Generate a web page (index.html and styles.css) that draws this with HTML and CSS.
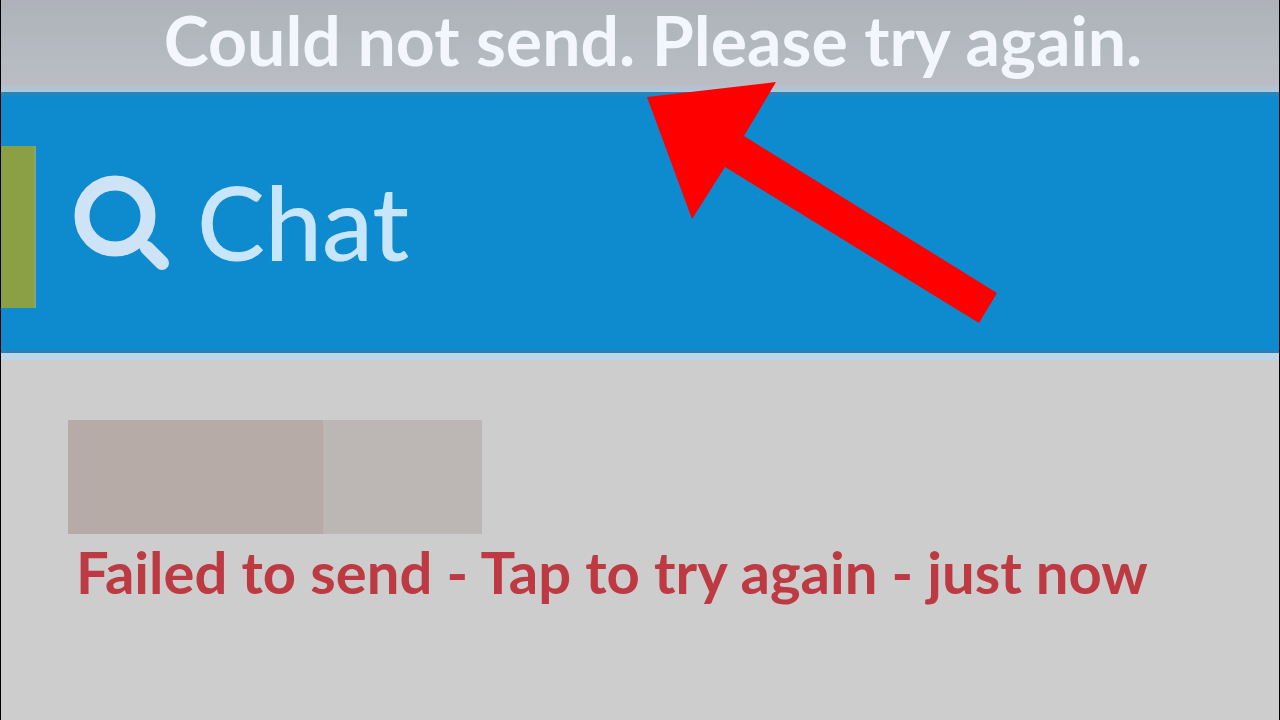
FILE: index.html
```html
<!DOCTYPE html>
<html lang="en">
<head>
<meta charset="utf-8">
<meta name="viewport" content="width=device-width, initial-scale=1">
<title>Chat</title>
<link rel="stylesheet" href="styles.css">
</head>
<body>
<div class="screen">
  <div class="banner" role="alert">Could not send. Please try again.</div>
  <header class="header">
    <span class="tab"></span>
    <button class="search" type="button" aria-label="Search">
      <svg class="search-icon" viewBox="0 0 98 100" fill="none" stroke="#cfe3f6" aria-hidden="true">
        <circle cx="42" cy="44" r="33" stroke-width="15"/>
        <path d="M64 66 L72 74" stroke-width="11"/>
        <path d="M74 76 L89 91" stroke-width="14" stroke-linecap="round"/>
      </svg>
    </button>
    <h1 class="title">Chat</h1>
    <svg class="arrow" viewBox="0 0 352 242" aria-hidden="true">
      <polygon points="0,15 129,0 97,54 350,211 332,241 78,85 45,137" fill="#fe0000"/>
    </svg>
  </header>
  <main class="list">
    <button class="message" type="button">
      <span class="name"><span class="name-first"></span><span class="name-last"></span></span>
      <span class="status">Failed to send - Tap to try again - just now</span>
    </button>
  </main>
</div>
</body>
</html>
```
FILE: styles.css
```css
* {
  box-sizing: border-box;
}

body {
  margin: 0;
  font-family: Lato, "Open Sans", sans-serif;
  background: #cdcdcd;
}

button {
  padding: 0;
  border: 0;
  background: none;
  font: inherit;
  cursor: pointer;
}

.screen {
  display: flex;
  flex-direction: column;
  min-height: 100vh;
  border: solid #000;
  border-width: 0 1px;
}

.banner {
  padding: 0 0 12px 26px;
  background: linear-gradient(#aeb1b9, #b3b9c0 50%, #bbbcc3 92%, #a9cbe3);
  color: #f3f6fd;
  font-size: 68px;
  font-weight: 700;
  line-height: 80px;
  text-align: center;
  white-space: nowrap;
}

.header {
  position: relative;
  display: flex;
  align-items: center;
  padding: 50px 0 42px;
  border-top: 4px solid #2686bb;
  border-bottom: 3px solid #2a7fb6;
  background: #0e8acf;
}

.tab {
  width: 35px;
  height: 162px;
  background: #8ba044;
  border-right: 2px solid #7fa777;
}

.search {
  margin-left: 37px;
  padding-bottom: 10px;
}

.search-icon {
  display: block;
  width: 98px;
  height: 100px;
}

.title {
  margin: 0 0 0 26px;
  padding-bottom: 10px;
  color: #c8e6fb;
  font-size: 102px;
  font-weight: 500;
  line-height: 120px;
}

.arrow {
  position: absolute;
  top: -14px;
  left: 646px;
  width: 352px;
  height: 242px;
}

.list {
  flex: 1;
  padding: 60px 67px;
  border-top: 7px solid #bcd6e6;
}

.message {
  display: flex;
  flex-direction: column;
  align-items: flex-start;
  text-align: left;
}

.name {
  display: flex;
  height: 114px;
}

.name-first {
  width: 255px;
  background: #b6aba6;
}

.name-last {
  width: 159px;
  background: #bcb7b4;
}

.status {
  padding: 0 8px;
  color: #bd3a42;
  font-size: 58px;
  font-weight: 700;
  line-height: 76px;
  white-space: nowrap;
}
```
